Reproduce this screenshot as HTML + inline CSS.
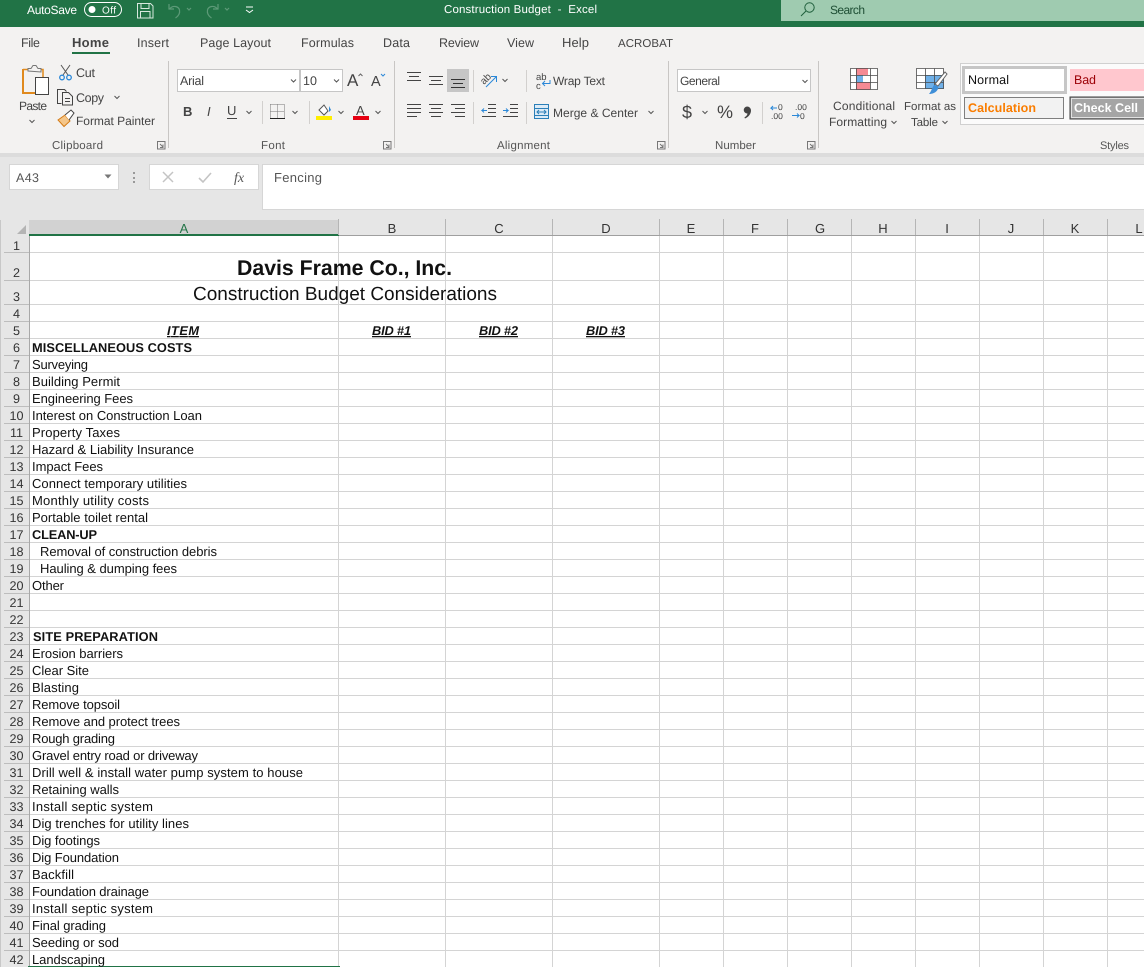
<!DOCTYPE html>
<html><head><meta charset="utf-8"><title>Construction Budget - Excel</title>
<style>
html,body{margin:0;padding:0;background:#fff;width:1144px;height:967px;overflow:hidden}
svg{display:block;font-family:"Liberation Sans",Arial,sans-serif;text-rendering:geometricPrecision}
.t{font-size:12.5px;fill:#444}
.g{font-size:11.5px;fill:#555}
.c{font-size:13px;fill:#111}
.b{font-weight:bold;font-size:12.8px}
.r{font-size:12.6px;fill:#333;text-anchor:middle}
.h{font-size:13px;fill:#333;text-anchor:middle}
.bid{font-size:12.8px;font-weight:bold;font-style:italic;text-decoration:underline;fill:#111;text-anchor:middle}
.ln{stroke:#444;stroke-width:1;fill:none}
.ch{stroke:#555;stroke-width:1;fill:none}
</style></head><body>
<svg width="1144" height="967" viewBox="0 0 1144 967" xmlns="http://www.w3.org/2000/svg">
<defs>
<pattern id="rows" x="0" y="338" width="10" height="17" patternUnits="userSpaceOnUse"><rect y="0" width="10" height="1" fill="#d4d4d4"/></pattern>
<pattern id="rowsH" x="0" y="338" width="10" height="17" patternUnits="userSpaceOnUse"><rect y="0" width="10" height="1" fill="#bdbdbd"/></pattern>
</defs>
<!-- title bar -->
<rect width="1144" height="27" fill="#217346"/>
<rect x="781" width="363" height="21" fill="#9fcbb0"/>
<text x="27" y="14" font-size="12" fill="#fff" textLength="50">AutoSave</text>
<rect x="84.500" y="2.500" width="37" height="14" rx="7" fill="none" stroke="#fff"/>
<circle cx="92" cy="9.500" r="3.500" fill="#fff"/>
<text x="102" y="13.500" font-size="10" fill="#fff" textLength="14">Off</text>
<path d="M137.500 3.500h13l2.500 2.500v12h-15.500zM141 3.500v5h8v-5M140.500 18v-6.500h9.500v6.500" fill="none" stroke="#d8e8de"/>
<g fill="none" stroke="#5d9a78" stroke-width="1.200">
<path d="M169 4v5h5M169.500 9c3-4 9-3 10 1 .6 3-1 6-4 8"/><path d="M187 8l2 2 2-2"/>
<path d="M218 4v5h-5M217.500 9c-3-4-9-3-10 1-.6 3 1 6 4 8"/><path d="M225 8l2 2 2-2"/>
</g>
<path d="M246 7h7M246 10l3.500 2.500 3.500-2.500" stroke="#fff" fill="none"/>
<text x="444" y="13" font-size="11.500" fill="#fff" xml:space="preserve" textLength="153">Construction Budget  -  Excel</text>
<circle cx="809.500" cy="7.500" r="4.700" fill="none" stroke="#1f5f3c"/><path d="M806 11l-5 5" stroke="#1f5f3c"/>
<text x="830" y="14" font-size="12" fill="#1f4f35" textLength="35">Search</text>

<!-- ribbon -->
<rect y="27" width="1144" height="126" fill="#f3f2f1"/>
<rect y="153" width="1144" height="4" fill="#dcdcdc"/>
<rect y="157" width="1144" height="63" fill="#e6e6e6"/>
<text class="t" x="21" y="47" textLength="19">File</text>
<text class="t" x="72" y="47" style="font-weight:bold;fill:#444;font-size:13px" textLength="37">Home</text>
<text class="t" x="137" y="47" textLength="32">Insert</text>
<text class="t" x="200" y="47" textLength="71">Page Layout</text>
<text class="t" x="301" y="47" textLength="53">Formulas</text>
<text class="t" x="383" y="47" textLength="27">Data</text>
<text class="t" x="439" y="47" textLength="40">Review</text>
<text class="t" x="507" y="47" textLength="27">View</text>
<text class="t" x="562" y="47" style="font-size:13px" textLength="27">Help</text>
<text class="t" x="618" y="47" style="font-size:11.500px" textLength="55">ACROBAT</text>
<rect x="72" y="52" width="38" height="2" fill="#217346"/>
<path d="M168.500 61v87M394.500 61v87M668.500 61v87M818.500 61v87" stroke="#c8c6c4"/>
<text class="g" x="52" y="149" textLength="51">Clipboard</text>
<text class="g" x="261" y="149" textLength="24">Font</text>
<text class="g" x="497" y="149" textLength="53">Alignment</text>
<text class="g" x="715" y="149" textLength="41">Number</text>
<text class="g" x="1100" y="149" style="font-size:11px" textLength="29">Styles</text>
<g fill="none" stroke="#777">
<path d="M157.500 149v-7.500h7.500v7.500zM160 144l3 3M163 144.500v3h-3"/>
<path d="M383.500 149v-7.500h7.500v7.500zM386 144l3 3M389 144.500v3h-3"/>
<path d="M657.500 149v-7.500h7.500v7.500zM660 144l3 3M663 144.500v3h-3"/>
<path d="M807.500 149v-7.500h7.500v7.500zM810 144l3 3M813 144.500v3h-3"/>
</g>
<!-- clipboard -->
<path d="M23 69.500h6M37 69.500h6v8" fill="none" stroke="#e08a1e" stroke-width="1.500"/>
<path d="M23 69v24h13" fill="none" stroke="#e08a1e" stroke-width="2"/>
<path d="M28 71v-2.500h3l2-3h3l2 3h3v3.500z" fill="#f3f2f1" stroke="#777"/>
<rect x="35.500" y="77.500" width="13" height="17" fill="#fff" stroke="#444"/>
<text x="19" y="110" class="t" style="font-size:12px" textLength="28">Paste</text>
<path class="ch" d="M29.500 120l2.500 2.500 2.500-2.500M114.500 96l2.500 2.500 2.500-2.500"/>
<path d="M61 65l7 10M70 65l-7 10" stroke="#555" fill="none"/>
<circle cx="62" cy="77.500" r="2.300" fill="none" stroke="#2b88d8" stroke-width="1.300"/><circle cx="69" cy="77.500" r="2.300" fill="none" stroke="#2b88d8" stroke-width="1.300"/>
<text class="t" x="76" y="77" textLength="19">Cut</text>
<path d="M61.500 103.500h-4v-14h7l2 2" fill="none" stroke="#444"/>
<path d="M62.500 92.500h6l4 4v8.500h-10zM65 98.500h5M65 101.500h5" fill="none" stroke="#444"/>
<text class="t" x="76" y="102" textLength="28">Copy</text>
<path d="M58 120l7-5 5 6-6 5.500z" fill="#f4c68a" stroke="#d47a14"/>
<path d="M65 115l6-5 3 3-5 7" fill="#fff" stroke="#444"/>
<text class="t" x="76" y="125" style="font-size:12px" textLength="79">Format Painter</text>
<!-- font -->
<rect x="177.500" y="69.500" width="122" height="22" fill="#fff" stroke="#c6c6c6"/>
<rect x="300.500" y="69.500" width="42" height="22" fill="#fff" stroke="#c6c6c6"/>
<text x="180" y="85" class="t" textLength="24">Arial</text>
<text x="303" y="85" class="t">10</text>
<path class="ch" d="M291 79.500l2.500 2.500 2.500-2.500M334 79.500l2.500 2.500 2.500-2.500"/>
<text x="347" y="86" font-size="17" fill="#444">A</text>
<path d="M358.500 76l2-2 2 2" fill="none" stroke="#666"/>
<text x="371" y="86" font-size="14.500" fill="#444">A</text>
<path d="M381 74l2 2 2-2" fill="none" stroke="#2b88d8"/>
<text x="183" y="116" font-size="13" font-weight="bold" fill="#444">B</text>
<text x="207" y="116" font-size="13" font-style="italic" fill="#444">I</text>
<text x="227" y="115" font-size="13" fill="#444">U</text>
<path d="M227 118.500h10" stroke="#444"/>
<path class="ch" d="M246.500 111l2.500 2.500 2.500-2.500M292.500 111l2.500 2.500 2.500-2.500M338.500 111l2.500 2.500 2.500-2.500M375.500 111l2.500 2.500 2.500-2.500"/>
<path d="M262.500 101v23M309.500 101v23" stroke="#d2d0ce"/>
<path d="M270.500 104.500h14v14M270.500 104.500v14M277.500 104.500v14M270.500 111.500h14" stroke="#777" stroke-dasharray="1 1" fill="none"/>
<path d="M270 118.500h15" stroke="#222"/>
<path d="M319 110l5-5 4 6-4 4z" fill="#fff" stroke="#555"/><path d="M329 106l2 4-2 2z" fill="#2b88d8"/>
<rect x="316" y="116" width="16" height="4" fill="#ffee00"/>
<text x="356" y="115" font-size="13" fill="#444">A</text>
<rect x="353" y="116" width="16" height="4" fill="#e60012"/>
<!-- alignment -->
<g class="ln">
<path d="M407 72.500h14M409 76.500h10M407 80.500h14"/>
<path d="M429 76.500h14M431 80.500h10M429 84.500h14"/>
<path d="M407 104.500h14M407 108.500h14M407 112.500h14M407 116.500h10"/>
<path d="M429 104.500h14M431 108.500h10M429 112.500h14M431 116.500h10"/>
<path d="M451 104.500h14M455 108.500h10M451 112.500h14M455 116.500h10"/>
<path d="M488 104.500h8M488 108.500h8M488 112.500h8M482 116.500h14"/>
<path d="M510 104.500h8M510 108.500h8M510 112.500h8M503 116.500h15"/>
</g>
<rect x="447" y="69" width="22" height="23" fill="#c6c6c6"/>
<path d="M451 79.500h14M453 83.500h10M451 87.500h14" stroke="#333"/>
<path d="M473.500 70v22M473.500 102v22M526.500 70v22M526.500 102v22M762.500 102v22" stroke="#d2d0ce"/>
<path d="M487 110.500h-5l2-2M482 110.500l2 2M503 110.500h5l-2-2M508 110.500l-2 2" stroke="#2b88d8" fill="none"/>
<text transform="translate(484 85) rotate(-45)" font-size="10" fill="#444">ab</text>
<path d="M486 87l10-10M491 76.500h5.500v5.500" fill="none" stroke="#2b88d8"/>
<path class="ch" d="M502.500 79l2.500 2.500 2.500-2.500"/>
<text x="536" y="80" font-size="9.500" fill="#444">ab</text><text x="536" y="89" font-size="9.500" fill="#444">c</text>
<path d="M550 80v3.500h-7M545 81l-2.500 2.500 2.500 2.500" fill="none" stroke="#2b88d8"/>
<text class="t" x="553" y="85" style="font-size:12px" textLength="52">Wrap Text</text>
<rect x="534.500" y="104.500" width="14" height="14" fill="#dcebf7" stroke="#2b7fb8"/>
<path d="M534 108.500h15M534 115.500h15M537 112h9M539 110l-2 2 2 2M544 110l2 2-2 2" fill="none" stroke="#2b7fb8"/>
<text class="t" x="553" y="117" style="font-size:12px" textLength="85">Merge &amp; Center</text>
<path class="ch" d="M648.500 111l2.500 2.500 2.500-2.500"/>
<!-- number -->
<rect x="677.500" y="69.500" width="133" height="22" fill="#fff" stroke="#c6c6c6"/>
<text class="t" x="680" y="85" style="font-size:12px" textLength="40">General</text>
<path class="ch" d="M802.500 80l2.500 2.500 2.500-2.500M702.500 111l2.500 2.500 2.500-2.500"/>
<text x="682" y="118" font-size="18" fill="#444">$</text>
<text x="717" y="118" font-size="18" fill="#444">%</text>
<path d="M747 106.500a4 4 0 0 1 4 4c0 3.500-2.500 6.500-6 8l-.6-1c1.600-1 3-2.500 3.100-4a3.500 3.500 0 1 1-.5-7z" fill="#444"/>
<g font-size="8.500" fill="#444"><text x="778" y="110">0</text><text x="771" y="119">.00</text><text x="795" y="110">.00</text><text x="800" y="119">0</text></g>
<path d="M777 108h-6l2-2M771 108l2 2M792 115.500h7l-2-2M799 115.500l-2 2" fill="none" stroke="#2b88d8"/>
<!-- styles icons -->
<rect x="850" y="68" width="28" height="22" fill="#fff"/>
<rect x="856" y="68" width="12" height="7" fill="#f58a94"/><rect x="856" y="82" width="14" height="8" fill="#f58a94"/>
<rect x="856" y="75" width="7" height="7" fill="#6fb0e8"/>
<path d="M850.500 68.500h27v21h-27zM850.500 75.500h27M850.500 82.500h27M856.500 68.500v21M870.500 68.500v21" fill="none" stroke="#4a4a4a" stroke-width=".8"/>
<text x="833" y="110" class="t" style="font-size:12px" textLength="62">Conditional</text>
<text x="829" y="126" class="t" style="font-size:12px" textLength="58">Formatting</text>
<path class="ch" d="M891.500 121l2.500 2.500 2.500-2.500M942.500 121l2.500 2.500 2.500-2.500"/>
<rect x="916" y="68" width="28" height="21" fill="#fff"/>
<rect x="925" y="75" width="19" height="14" fill="#6fb0e8"/>
<path d="M916.500 68.500h27v20h-27zM916.500 75.500h27M916.500 82.500h27M925.500 68.500v20M934.500 68.500v20" fill="none" stroke="#4a4a4a" stroke-width=".8"/>
<path d="M945 72l2 2-9 12-3-2z" fill="#fff" stroke="#666"/>
<path d="M934 85c3 0 5 2 4 4-2 4-6 5-9 5 2-2 3-6 5-9z" fill="#3f8fd8"/>
<text x="904" y="110" class="t" style="font-size:11.500px" textLength="52">Format as</text>
<text x="911" y="126" class="t" style="font-size:11.500px" textLength="27">Table</text>
<!-- gallery -->
<rect x="960.500" y="63.500" width="190" height="61" fill="#fbfbfb" stroke="#d0d0d0"/>
<rect x="963.500" y="67.500" width="102" height="25" fill="#fff" stroke="#c6c6c6" stroke-width="3"/>
<text x="968" y="84" font-size="12.500" fill="#111" textLength="41">Normal</text>
<rect x="1070" y="69" width="80" height="22" fill="#ffc7ce"/>
<text x="1074" y="84" font-size="12.500" fill="#9c0006" textLength="22">Bad</text>
<rect x="964.500" y="97.500" width="99" height="21" fill="#f2f2f2" stroke="#7f7f7f"/>
<text x="968" y="112" font-size="12.500" font-weight="bold" fill="#fa7d00" textLength="68">Calculation</text>
<rect x="1070" y="97" width="80" height="22" fill="#a5a5a5" stroke="#3f3f3f"/>
<rect x="1071.500" y="98.500" width="80" height="19" fill="none" stroke="#f2f2f2" stroke-width=".8"/>
<text x="1074" y="112" font-size="12.500" font-weight="bold" fill="#fff" textLength="64">Check Cell</text>

<!-- formula bar -->
<rect x="9.500" y="164.500" width="109" height="25" fill="#fff" stroke="#d6d6d6"/>
<text x="16" y="182" font-size="12.500" fill="#555" textLength="23">A43</text>
<path d="M104.500 174.500h7l-3.500 4z" fill="#777"/>
<g fill="#999"><rect x="133" y="172" width="2" height="2"/><rect x="133" y="177" width="2" height="2"/><rect x="133" y="181" width="2" height="2"/></g>
<rect x="149.500" y="164.500" width="109" height="25" fill="#fff" stroke="#d6d6d6"/>
<path d="M163 172l10 10M173 172l-10 10" stroke="#c4c4c4" stroke-width="1.500" fill="none"/>
<path d="M199 178l4 4 8-9" stroke="#c4c4c4" stroke-width="1.600" fill="none"/>
<text x="234" y="182" font-size="14" font-style="italic" font-family="Liberation Serif" fill="#555">fx</text>
<rect x="262.500" y="164.500" width="900" height="45" fill="#fff" stroke="#d6d6d6"/>
<text x="274" y="182" font-size="13" fill="#555" textLength="48">Fencing</text>

<!-- sheet -->
<rect y="220" width="1144" height="16" fill="#e6e6e6"/>
<rect y="220" width="29" height="747" fill="#e6e6e6"/>
<rect x="0" y="220" width="1" height="747" fill="#c8c8c8"/>
<rect x="29" y="236" width="1115" height="731" fill="#fff"/>
<path d="M17 234h9v-9z" fill="#b4b4b4"/>
<rect x="29" y="220" width="310" height="16" fill="#d2d2d2"/>
<rect x="339" y="235" width="805" height="1" fill="#9f9f9f"/>
<rect x="29" y="234" width="310" height="2" fill="#217346"/>
<rect x="29" y="338" width="1115" height="629" fill="url(#rows)"/>
<path d="M29 252.500H1144M29 280.500H1144M29 304.500H1144M29 321.500H1144" stroke="#d4d4d4"/>
<path d="M338.500 236V967M445.500 236V967M552.500 236V967M659.500 236V967M723.500 236V967M787.500 236V967M851.500 236V967M915.500 236V967M979.500 236V967M1043.500 236V967M1107.500 236V967" stroke="#d4d4d4"/>
<path d="M338.500 219v16M445.500 219v16M552.500 219v16M659.500 219v16M723.500 219v16M787.500 219v16M851.500 219v16M915.500 219v16M979.500 219v16M1043.500 219v16M1107.500 219v16" stroke="#b5b5b5"/>
<rect x="4" y="338" width="25" height="629" fill="url(#rowsH)"/>
<path d="M4 252.500h25M4 280.500h25M4 304.500h25M4 321.500h25" stroke="#bdbdbd"/>
<rect x="29" y="236" width="1" height="731" fill="#a8a8a8"/>
<rect x="28" y="966" width="312" height="1" fill="#217346"/>
<text class="h" x="184" y="233" style="fill:#217346">A</text>
<text class="h" x="392" y="233">B</text><text class="h" x="499" y="233">C</text><text class="h" x="606" y="233">D</text>
<text class="h" x="691" y="233">E</text><text class="h" x="755" y="233">F</text><text class="h" x="820" y="233">G</text>
<text class="h" x="883" y="233">H</text><text class="h" x="947" y="233">I</text><text class="h" x="1011" y="233">J</text>
<text class="h" x="1075" y="233">K</text><text class="h" x="1139" y="233">L</text>
<g>
<text class="r" x="16.500" y="250">1</text><text class="r" x="16.500" y="277">2</text><text class="r" x="16.500" y="301">3</text><text class="r" x="16.500" y="318">4</text><text class="r" x="16.500" y="335">5</text>
<text class="r" x="16.500" y="352">6</text><text class="r" x="16.500" y="369">7</text><text class="r" x="16.500" y="386">8</text><text class="r" x="16.500" y="403">9</text><text class="r" x="16.500" y="420">10</text>
<text class="r" x="16.500" y="437">11</text><text class="r" x="16.500" y="454">12</text><text class="r" x="16.500" y="471">13</text><text class="r" x="16.500" y="488">14</text><text class="r" x="16.500" y="505">15</text>
<text class="r" x="16.500" y="522">16</text><text class="r" x="16.500" y="539">17</text><text class="r" x="16.500" y="556">18</text><text class="r" x="16.500" y="573">19</text><text class="r" x="16.500" y="590">20</text>
<text class="r" x="16.500" y="607">21</text><text class="r" x="16.500" y="624">22</text><text class="r" x="16.500" y="641">23</text><text class="r" x="16.500" y="658">24</text><text class="r" x="16.500" y="675">25</text>
<text class="r" x="16.500" y="692">26</text><text class="r" x="16.500" y="709">27</text><text class="r" x="16.500" y="726">28</text><text class="r" x="16.500" y="743">29</text><text class="r" x="16.500" y="760">30</text>
<text class="r" x="16.500" y="777">31</text><text class="r" x="16.500" y="794">32</text><text class="r" x="16.500" y="811">33</text><text class="r" x="16.500" y="828">34</text><text class="r" x="16.500" y="845">35</text>
<text class="r" x="16.500" y="862">36</text><text class="r" x="16.500" y="879">37</text><text class="r" x="16.500" y="896">38</text><text class="r" x="16.500" y="913">39</text><text class="r" x="16.500" y="930">40</text>
<text class="r" x="16.500" y="947">41</text><text class="r" x="16.500" y="964">42</text>
</g>
<text x="344.500" y="275" font-size="21.300" font-weight="bold" fill="#111" text-anchor="middle" textLength="215">Davis Frame Co., Inc.</text>
<text x="345" y="300" font-size="19" fill="#111" text-anchor="middle" textLength="304">Construction Budget Considerations</text>
<text class="bid" x="183" y="335" textLength="32">ITEM</text><text class="bid" x="391.500" y="335" textLength="39">BID #1</text><text class="bid" x="498.500" y="335" textLength="39">BID #2</text><text class="bid" x="605.500" y="335" textLength="39">BID #3</text>
<g>
<text class="c b" x="32" y="352" textLength="160">MISCELLANEOUS COSTS</text>
<text class="c" x="32" y="369" textLength="56">Surveying</text>
<text class="c" x="32" y="386" textLength="88">Building Permit</text>
<text class="c" x="32" y="403" textLength="101">Engineering Fees</text>
<text class="c" x="32" y="420" textLength="170">Interest on Construction Loan</text>
<text class="c" x="32" y="437" textLength="88">Property Taxes</text>
<text class="c" x="32" y="454" textLength="162">Hazard &amp; Liability Insurance</text>
<text class="c" x="32" y="471" textLength="71">Impact Fees</text>
<text class="c" x="32" y="488" textLength="155">Connect temporary utilities</text>
<text class="c" x="32" y="505" textLength="117">Monthly utility costs</text>
<text class="c" x="32" y="522" textLength="116">Portable toilet rental</text>
<text class="c b" x="32" y="539" textLength="65">CLEAN-UP</text>
<text class="c" x="40" y="556" textLength="177">Removal of construction debris</text>
<text class="c" x="40" y="573" textLength="137">Hauling &amp; dumping fees</text>
<text class="c" x="32" y="590" textLength="32">Other</text>
<text class="c b" x="33" y="641" textLength="125">SITE PREPARATION</text>
<text class="c" x="32" y="658" textLength="91">Erosion barriers</text>
<text class="c" x="32" y="675" textLength="57">Clear Site</text>
<text class="c" x="32" y="692" textLength="47">Blasting</text>
<text class="c" x="32" y="709" textLength="88">Remove topsoil</text>
<text class="c" x="32" y="726" textLength="148">Remove and protect trees</text>
<text class="c" x="32" y="743" textLength="83">Rough grading</text>
<text class="c" x="32" y="760" textLength="166">Gravel entry road or driveway</text>
<text class="c" x="32" y="777" textLength="271">Drill well &amp; install water pump system to house</text>
<text class="c" x="32" y="794" textLength="87">Retaining walls</text>
<text class="c" x="32" y="811" textLength="121">Install septic system</text>
<text class="c" x="32" y="828" textLength="157">Dig trenches for utility lines</text>
<text class="c" x="32" y="845" textLength="68">Dig footings</text>
<text class="c" x="32" y="862" textLength="87">Dig Foundation</text>
<text class="c" x="32" y="879" textLength="42">Backfill</text>
<text class="c" x="32" y="896" textLength="117">Foundation drainage</text>
<text class="c" x="32" y="913" textLength="121">Install septic system</text>
<text class="c" x="32" y="930" textLength="74">Final grading</text>
<text class="c" x="32" y="947" textLength="87">Seeding or sod</text>
<text class="c" x="32" y="964" textLength="73">Landscaping</text>
</g>
</svg>
</body></html>
